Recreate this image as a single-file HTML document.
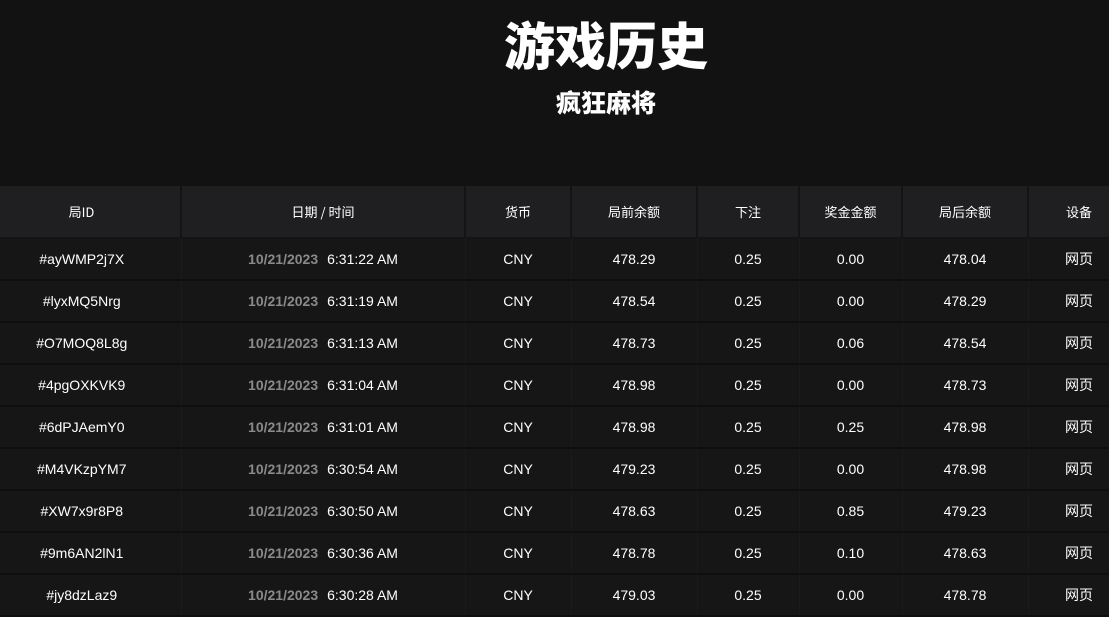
<!DOCTYPE html>
<html><head><meta charset="utf-8"><style>
body{margin:0;background:#121212;width:1109px;height:608px;overflow:hidden;font-family:"Liberation Sans","Noto Sans CJK SC",sans-serif;color:#fff}
h1{position:absolute;left:0;width:1212px;top:12px;margin:0;text-align:center;font-size:51px;line-height:62px;font-weight:900;font-family:"Noto Sans CJK SC",sans-serif}
h2{position:absolute;left:0;width:1212px;top:85px;margin:0;text-align:center;font-size:25px;line-height:34px;font-weight:900;font-family:"Noto Sans CJK SC",sans-serif}
table{position:absolute;top:186px;left:0;border-collapse:collapse;table-layout:fixed;width:1130px}
td,th{text-align:center;padding:0;font-size:14px}
th{background:#1f1f21;height:51px;font-weight:normal;font-size:13px;border-right:2px solid #141414;border-bottom:2px solid #141414;font-family:"Noto Sans CJK SC",sans-serif}
td{background:#161617;height:40px;border-bottom:2px solid #0f0f0f;border-right:1px solid #1b1b1c}
td.d span{color:#8a8a8a;font-weight:bold;margin-right:9px}
.c0{padding-right:17px}
</style></head><body>
<h1>游戏历史</h1>
<h2>疯狂麻将</h2>
<table>
<colgroup><col style="width:181px"><col style="width:284px"><col style="width:106px"><col style="width:126px"><col style="width:102px"><col style="width:103px"><col style="width:126px"><col style="width:102px"></colgroup>
<tr><th class="c0">局ID</th><th>日期 / 时间</th><th>货币</th><th>局前余额</th><th>下注</th><th>奖金金额</th><th>局后余额</th><th>设备</th></tr>
<tr><td class="c0">#ayWMP2j7X</td><td class="d"><span>10/21/2023</span>6:31:22 AM</td><td>CNY</td><td>478.29</td><td>0.25</td><td>0.00</td><td>478.04</td><td>网页</td></tr>
<tr><td class="c0">#lyxMQ5Nrg</td><td class="d"><span>10/21/2023</span>6:31:19 AM</td><td>CNY</td><td>478.54</td><td>0.25</td><td>0.00</td><td>478.29</td><td>网页</td></tr>
<tr><td class="c0">#O7MOQ8L8g</td><td class="d"><span>10/21/2023</span>6:31:13 AM</td><td>CNY</td><td>478.73</td><td>0.25</td><td>0.06</td><td>478.54</td><td>网页</td></tr>
<tr><td class="c0">#4pgOXKVK9</td><td class="d"><span>10/21/2023</span>6:31:04 AM</td><td>CNY</td><td>478.98</td><td>0.25</td><td>0.00</td><td>478.73</td><td>网页</td></tr>
<tr><td class="c0">#6dPJAemY0</td><td class="d"><span>10/21/2023</span>6:31:01 AM</td><td>CNY</td><td>478.98</td><td>0.25</td><td>0.25</td><td>478.98</td><td>网页</td></tr>
<tr><td class="c0">#M4VKzpYM7</td><td class="d"><span>10/21/2023</span>6:30:54 AM</td><td>CNY</td><td>479.23</td><td>0.25</td><td>0.00</td><td>478.98</td><td>网页</td></tr>
<tr><td class="c0">#XW7x9r8P8</td><td class="d"><span>10/21/2023</span>6:30:50 AM</td><td>CNY</td><td>478.63</td><td>0.25</td><td>0.85</td><td>479.23</td><td>网页</td></tr>
<tr><td class="c0">#9m6AN2lN1</td><td class="d"><span>10/21/2023</span>6:30:36 AM</td><td>CNY</td><td>478.78</td><td>0.25</td><td>0.10</td><td>478.63</td><td>网页</td></tr>
<tr><td class="c0">#jy8dzLaz9</td><td class="d"><span>10/21/2023</span>6:30:28 AM</td><td>CNY</td><td>479.03</td><td>0.25</td><td>0.00</td><td>478.78</td><td>网页</td></tr>
</table>
</body></html>
